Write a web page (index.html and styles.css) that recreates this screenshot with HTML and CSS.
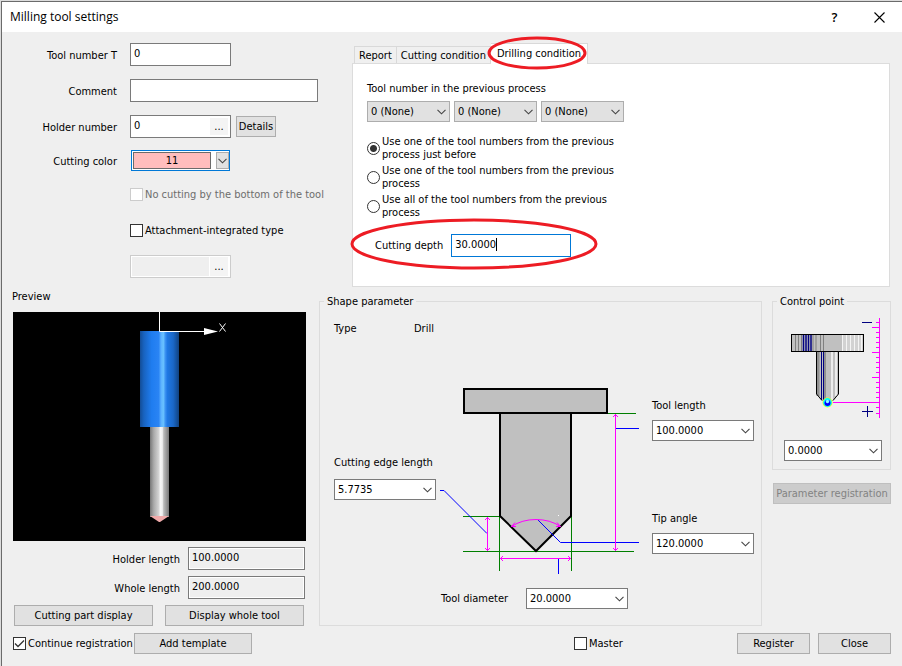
FILE: index.html
```html
<!DOCTYPE html>
<html lang="en">
<head>
<meta charset="utf-8">
<title>Milling tool settings</title>
<link rel="stylesheet" href="styles.css">
</head>
<body>
<svg width="0" height="0" class="defs" aria-hidden="true">
  <symbol id="chevron" viewBox="0 0 9 6"><path d="M0.5 0.8 4.5 4.8 8.5 0.8" fill="none" stroke="#444" stroke-width="1.1"/></symbol>
</svg>
<main class="dialog">
  <header class="titlebar">
    <h1>Milling tool settings</h1>
    <button class="title-button" aria-label="Help">?</button>
    <button class="title-button" aria-label="Close window"><svg width="11" height="11" viewBox="0 0 11 11"><path d="M0.5 0.5 10.5 10.5M10.5 0.5 0.5 10.5" stroke="#000" stroke-width="1.1"/></svg></button>
  </header>

  <section class="upper">
    <form class="tool-form">
      <div class="row"><label for="tool-no">Tool number T</label><input id="tool-no" class="text short" value="0"></div>
      <div class="row"><label for="comment">Comment</label><input id="comment" class="text grow" value=""></div>
      <div class="row"><label for="holder">Holder number</label>
        <div class="picker short"><input id="holder" value="0"><button type="button" aria-label="Browse holders">...</button></div>
        <button type="button" class="button details">Details</button></div>
      <div class="row color-row"><label for="color">Cutting color</label>
        <div class="color-combo"><select id="color"><option>11</option></select><span class="drop"><svg class="chevron" width="9" height="6"><use href="#chevron"/></svg></span></div></div>
      <div class="check-row first"><label class="check disabled"><input type="checkbox" disabled>No cutting by the bottom of the tool</label></div>
      <div class="check-row"><label class="check"><input type="checkbox">Attachment-integrated type</label></div>
      <div class="picker-row"><div class="picker short disabled"><input aria-label="Attachment" disabled><button type="button" aria-label="Browse attachments">...</button></div></div>
    </form>

    <section class="tabs">
      <div class="tab-bar" role="tablist">
        <button class="tab" role="tab">Report</button>
        <button class="tab" role="tab">Cutting condition</button>
        <button class="tab selected" role="tab" aria-selected="true">Drilling condition
          <svg class="mark tab-mark" width="100" height="34" viewBox="0 0 100 34"><ellipse cx="50" cy="17" rx="48" ry="15"/></svg></button>
      </div>
      <div class="tab-panel" role="tabpanel">
        <p class="panel-label">Tool number in the previous process</p>
        <div class="selects">
          <span class="combo gray"><select aria-label="First previous tool"><option>0 (None)</option></select><svg class="chevron" width="9" height="6"><use href="#chevron"/></svg></span>
          <span class="combo gray"><select aria-label="Second previous tool"><option>0 (None)</option></select><svg class="chevron" width="9" height="6"><use href="#chevron"/></svg></span>
          <span class="combo gray"><select aria-label="Third previous tool"><option>0 (None)</option></select><svg class="chevron" width="9" height="6"><use href="#chevron"/></svg></span>
        </div>
        <div class="radios">
          <label><input type="radio" name="prev" checked><span>Use one of the tool numbers from the previous<br>process just before</span></label>
          <label><input type="radio" name="prev"><span>Use one of the tool numbers from the previous<br>process</span></label>
          <label><input type="radio" name="prev"><span>Use all of the tool numbers from the previous<br>process</span></label>
        </div>
        <div class="depth">
          <label for="depth">Cutting depth</label>
          <span class="focused"><input id="depth" value="30.0000" size="7"><i class="caret"></i></span>
          <svg class="mark depth-mark" width="248" height="54" viewBox="0 0 248 54"><ellipse cx="124" cy="27" rx="122" ry="24"/></svg>
        </div>
      </div>
    </section>
  </section>

  <section class="lower">
    <section class="preview">
      <h2>Preview</h2>
      <div class="view">
        <svg width="293" height="229" viewBox="13 312 293 229">
          <defs>
            <linearGradient id="holder-fill">
              <stop offset="0" stop-color="#134d96"/><stop offset=".1" stop-color="#1863c0"/><stop offset=".3" stop-color="#1f7df0"/><stop offset=".48" stop-color="#2a84f4"/><stop offset=".54" stop-color="#5cb2ff"/><stop offset=".6" stop-color="#69c2ff"/><stop offset=".65" stop-color="#3c92f2"/><stop offset=".7" stop-color="#1f78e4"/><stop offset=".85" stop-color="#1a68c8"/><stop offset="1" stop-color="#11427f"/>
            </linearGradient>
            <linearGradient id="shank-fill">
              <stop offset="0" stop-color="#777"/><stop offset=".2" stop-color="#aaa"/><stop offset=".45" stop-color="#d2d2d2"/><stop offset=".55" stop-color="#f6f6f6"/><stop offset=".65" stop-color="#eee"/><stop offset=".72" stop-color="#bbb"/><stop offset="1" stop-color="#777"/>
            </linearGradient>
          </defs>
          <rect x="140" y="331" width="39" height="96" fill="url(#holder-fill)"/>
          <rect x="150" y="427" width="19" height="90" fill="url(#shank-fill)"/>
          <path d="M150 516H169L160 522H159Z" fill="#efaaaa"/>
          <path d="M159.500 312V331.500H205" fill="none" stroke="#fff"/>
          <path d="M204 328 218 331.500 204 335Z" fill="#fff"/>
          <path d="M219.500 323.500 225.500 331.500M225.500 323.500 219.500 331.500" stroke="#fff"/>
        </svg>
      </div>
      <div class="length-row"><label for="holder-len">Holder length</label><input id="holder-len" class="text readonly" value="100.0000" readonly></div>
      <div class="length-row"><label for="whole-len">Whole length</label><input id="whole-len" class="text readonly" value="200.0000" readonly></div>
      <div class="view-buttons"><button class="button">Cutting part display</button><button class="button">Display whole tool</button></div>
    </section>

    <fieldset class="shape">
      <legend>Shape parameter</legend>
      <div class="type"><span>Type</span><span>Drill</span></div>
      <div class="diagram">
        <div class="field edge"><label for="edge">Cutting edge length</label>
          <span class="combo"><select id="edge"><option>5.7735</option></select><svg class="chevron" width="9" height="6"><use href="#chevron"/></svg></span></div>
        <svg class="drawing" width="216" height="190" viewBox="436 386 216 190" fill="none">
          <g stroke="#007f00"><path d="M463 516.500H500M463 551.500H634M608 413.500H636M499.500 516V571M571.500 516V571"/></g>
          <path d="M500 413H571V516L536 551 500 516Z" fill="#c0c0c0" stroke="#000" stroke-width="2"/>
          <rect x="464" y="389" width="143" height="24" fill="#c0c0c0" stroke="#000" stroke-width="2"/>
          <g stroke="#00f"><path d="M440 490.500H444L487 533.500M538 520 560.500 542.500H639M616 428.500H639M558.500 559V574"/></g>
          <g stroke="#f0f">
            <path d="M487.500 517V551M485 520 487.500 517.500 490 520M485 548 487.500 550.500 490 548"/>
            <path d="M615.500 414V551M613 417 615.500 414.500 618 417M613 548 615.500 550.500 618 548"/>
            <path d="M500 558.500H571M503 556 500.500 558.500 503 561M568 556 570.500 558.500 568 561"/>
            <path d="M511.500 526.500Q522 519.500 536 519.500T560.500 526.500M515 522.500 511.500 526.500H516M557 522.500 560.500 526.500H556"/>
          </g>
          <path d="M558 515.500H559" stroke="#fff"/>
        </svg>
        <div class="right-fields">
          <div class="field"><label for="length">Tool length</label>
            <span class="combo"><select id="length"><option>100.0000</option></select><svg class="chevron" width="9" height="6"><use href="#chevron"/></svg></span></div>
          <div class="field"><label for="angle">Tip angle</label>
            <span class="combo"><select id="angle"><option>120.0000</option></select><svg class="chevron" width="9" height="6"><use href="#chevron"/></svg></span></div>
        </div>
      </div>
      <div class="diameter"><label for="diameter">Tool diameter</label>
        <span class="combo"><select id="diameter"><option>20.0000</option></select><svg class="chevron" width="9" height="6"><use href="#chevron"/></svg></span></div>
    </fieldset>

    <div class="side">
      <fieldset class="control">
        <legend>Control point</legend>
        <svg width="92" height="102" viewBox="790 317 92 102" fill="none">
          <rect x="791.500" y="334.500" width="72" height="17" fill="#c0c0c0"/>
          <path d="M842 334h22v18h-22z" fill="#d2d2d2"/>
          <path d="M795.500 335v17M798.500 335v17M801.500 335v17M813 335v17M816 335v17M820.500 335v17M823.500 335v17" stroke="#808080"/>
          <path d="M803.500 335v17M806 335v17M808.500 335v17M811 335v17" stroke="#000080" stroke-width="1.500"/>
          <path d="M842.500 335v17M846.500 335v17M850.500 335v17M854.500 335v17M858.500 335v17M861.500 335v17" stroke="#f4f4f4"/>
          <rect x="791.500" y="334.500" width="72" height="17" stroke="#000"/>
          <path d="M816.500 351.500H838.500V394L833 401H822L816.500 394Z" fill="#c0c0c0"/>
          <path d="M818 352V396" stroke="#909090" stroke-width="3"/>
          <path d="M825 352V400" stroke="#909090" stroke-width="2"/>
          <path d="M821.500 352V400M823.500 352V400" stroke="#000080"/>
          <path d="M832 352V400M836 352V396" stroke="#ececec" stroke-width="2"/>
          <path d="M822 400.500 816.500 394V351.500H838.500V394L833 400.500" stroke="#000"/>
          <path d="M833 402.500H879M879.500 318V418M872 327.500H879M872 352.500H879M872 377.500H879M876 322.500H879M876 332.500H879M876 337.500H879M876 342.500H879M876 347.500H879M876 357.500H879M876 362.500H879M876 367.500H879M876 372.500H879M876 382.500H879M876 387.500H879M876 392.500H879M876 397.500H879M876 407.500H879M876 413.500H879" stroke="#f0f"/>
          <path d="M862 322.500H872M862 411.500H873M867.500 406V417" stroke="#000080"/>
          <circle cx="827.500" cy="402.500" r="5" fill="#ff0"/>
          <circle cx="827.500" cy="402.500" r="4.400" fill="#0ff"/>
          <circle cx="827.500" cy="403" r="3" fill="#00f"/>
          <circle cx="827.500" cy="401.500" r="1.700" fill="#8ff"/>
        </svg>
        <span class="combo"><select aria-label="Control point"><option>0.0000</option></select><svg class="chevron" width="9" height="6"><use href="#chevron"/></svg></span>
      </fieldset>
      <button class="button" disabled>Parameter registration</button>
    </div>
  </section>

  <footer class="footer">
    <label class="check continue"><input type="checkbox" checked>Continue registration</label>
    <button class="button add">Add template</button>
    <label class="check master"><input type="checkbox">Master</label>
    <button class="button action">Register</button>
    <button class="button action">Close</button>
  </footer>
</main>
</body>
</html>
```
FILE: styles.css
```css
* { box-sizing: border-box; }

body {
  margin: 0;
  padding: 1px 0 0 1px;
  background: #dcdcdc;
  color: #000;
  font: 11px/13px "DejaVu Sans Condensed", "Noto Sans", sans-serif;
}

input, select, button { font: inherit; color: inherit; margin: 0; }
h1, h2, p { margin: 0; font-weight: normal; }
h2 { font-size: 11px; }
label, legend, button { white-space: nowrap; }
.defs { position: absolute; }

.dialog {
  min-height: calc(100vh - 1px);
  border-top: 1px solid #6b6b6b;
  border-left: 1px solid #6b6b6b;
  background: #efefef;
}

/* Title bar */
.titlebar {
  display: flex;
  align-items: center;
  height: 30px;
  padding-left: 8px;
  background: #fff;
}
.titlebar h1 { flex: 1; font: 12px/16px "Open Sans", sans-serif; }
.title-button {
  display: flex;
  align-items: center;
  justify-content: center;
  width: 45px;
  height: 30px;
  padding: 0;
  border: 0;
  background: none;
  font: 600 13px/16px "Open Sans", sans-serif;
}

/* Shared controls */
.text {
  height: 23px;
  padding: 0 3px 2px;
  border: 1px solid #7a7a7a;
  background: #fff;
  min-width: 0;
}
.text.readonly { background: #efefef; box-shadow: inset 0 0 0 1px #fff; }
.short { width: 101px; }
.grow { flex: 1; }

.button {
  height: 21px;
  padding: 0;
  border: 1px solid #adadad;
  background: #e1e1e1;
}
.button:disabled { background: #ccc; border-color: #bfbfbf; color: #838383; }

.combo { position: relative; display: block; width: 102px; height: 21px; }
.combo select {
  appearance: none;
  display: block;
  width: 100%;
  height: 100%;
  padding: 0 16px 0 3px;
  border: 1px solid #7a7a7a;
  border-radius: 0;
  background: #fff;
}
.combo .chevron { position: absolute; right: 4px; top: 8px; }
.combo.gray { width: 83px; }
.combo.gray select { background: #e1e1e1; border-color: #adadad; }

.picker {
  display: flex;
  height: 23px;
  padding: 2px;
  border: 1px solid #7a7a7a;
  background: #fff;
}
.picker input { flex: 1; min-width: 0; padding: 0 1px 2px; border: 0; background: none; }
.picker button { width: 18px; padding: 0; border: 0; background: #f4f4f4; }
.picker.disabled { padding: 1px 2px 1px 1px; border-color: #ccc; }
.picker.disabled input { background: #efefef; margin-right: 1px; }

.check { display: flex; align-items: center; gap: 2px; }
.check input {
  appearance: none;
  flex: none;
  width: 13px;
  height: 13px;
  border: 1px solid #333;
  background: #fff;
}
.check input:checked {
  background: #fff url("data:image/svg+xml,%3Csvg xmlns='http://www.w3.org/2000/svg' viewBox='0 0 11 11'%3E%3Cpath d='M1 5.500 4 8.500 10 2.500' fill='none' stroke='%23333' stroke-width='1.300'/%3E%3C/svg%3E");
}
.check.disabled { color: #6d6d6d; }
.check.disabled input { border-color: #ccc; }

/* Upper half */
.upper { display: flex; gap: 34px; padding: 11px 12px 0 0; }
.tool-form { width: 316px; }
.row { display: flex; align-items: center; height: 23px; margin-bottom: 13px; }
.row > label { width: 115px; margin-right: 13px; padding-top: 1px; text-align: right; }
.color-row { height: 21px; margin: -1px 0 16px; }
.details { width: 40px; margin-left: 5px; }
.check-row { display: flex; height: 15px; margin: 21px 0 0 128px; }
.check-row.first { margin-top: 0; }
.picker-row { margin: 17px 0 0 128px; }

.color-combo {
  display: flex;
  width: 99px;
  height: 21px;
  margin-left: 1px;
  padding: 1px 0;
  border: 1px solid #0078d7;
  background: #fff;
}
.color-combo select {
  appearance: none;
  width: 78px;
  margin: 0 5px 0 1px;
  padding: 0;
  border: 1px solid #6b6b6b;
  border-radius: 0;
  background: #ffbdbd;
  text-align: center;
  text-align-last: center;
}
.drop {
  display: flex;
  flex: 1;
  align-items: center;
  justify-content: center;
  border: 1px solid #adadad;
  background: #e1e1e1;
}

.tabs { flex: 1; min-width: 0; }
.tab-bar { display: flex; align-items: flex-end; height: 20px; padding-left: 2px; }
.tab {
  height: 17px;
  padding: 0 4px;
  border: 1px solid #d9d9d9;
  border-width: 1px 1px 0 0;
  background: #f0f0f0;
}
.tab:first-child { border-left-width: 1px; }
.tab.selected { position: relative; height: 21px; margin-bottom: -1px; padding: 0 6px 2px; background: #fff; }
.mark { position: absolute; fill: none; stroke: #ed1c24; stroke-width: 3px; pointer-events: none; }
.tab-mark { left: -4px; top: -8px; }

.tab-panel { min-height: 224px; padding: 18px 14px 0; border: 1px solid #dcdcdc; background: #fff; }
.selects { display: flex; gap: 4px; margin-top: 6px; }
.radios { display: flex; flex-direction: column; gap: 3px; margin-top: 13px; }
.radios label { display: flex; align-items: center; gap: 2px; }
.radios input {
  appearance: none;
  flex: none;
  width: 13px;
  height: 13px;
  border: 1px solid #333;
  border-radius: 50%;
  background: #fff;
}
.radios input:checked { background: radial-gradient(circle, #333 0 3px, #fff 4px); }
.depth { position: relative; display: flex; align-items: center; gap: 8px; margin-top: 15px; padding-left: 8px; }
.focused {
  display: flex;
  align-items: center;
  width: 120px;
  height: 23px;
  padding: 0 3px 2px;
  border: 1px solid #0078d7;
  background: #fff;
}
.focused input { width: 41px; padding: 0; border: 0; outline: 0; }
.caret { width: 1px; height: 13px; background: #000; }
.depth-mark { left: -17px; top: -17px; }

/* Lower half */
.lower { display: flex; align-items: flex-start; padding: 3px 11px 0 10px; }
.preview { width: 294px; margin-right: 13px; }
.view { margin: 9px 0 6px 1px; background: #000; }
.view svg { display: block; }
.length-row { display: flex; align-items: center; justify-content: flex-end; gap: 8px; margin: 0 1px 6px 0; }
.length-row label { padding-top: 1px; }
.length-row .text { width: 117px; }
.view-buttons { display: flex; gap: 12px; padding: 0 2px; }
.view-buttons .button { flex: 1; }

fieldset { min-width: 0; margin: 0; padding: 0; border: 1px solid #dcdcdc; }
legend { margin-left: 5px; padding: 0 3px; }

.shape { flex: 1; margin-top: 5px; padding: 0 7px 16px 14px; }
.shape legend { margin-left: -10px; }
.type { display: flex; margin-top: 14px; }
.type span { width: 80px; }
.diagram { display: flex; margin-top: 51px; }
.field { display: flex; flex-direction: column; gap: 8px; }
.edge { width: 102px; padding-top: 70px; }
.edge .combo { margin-top: 2px; }
.drawing { flex: 1; min-width: 0; }
.right-fields { display: flex; flex-direction: column; gap: 71px; width: 102px; padding-top: 13px; }
.diameter { display: flex; align-items: center; gap: 18px; margin-top: 12px; padding-left: 107px; }

.side { width: 119px; margin: 5px 0 0 10px; }
.control { padding: 0 9px 8px 11px; }
.control legend { margin-left: -7px; }
.control svg:first-of-type { display: block; }
.control > svg { margin: 9px 0 0 6px; }
.control .combo { width: 98px; margin-top: 21px; }
.side > .button { width: 118px; margin: 13px 0 0 1px; }

.footer { display: flex; align-items: center; padding: 7px 11px 11px 11px; }
.continue { width: 121px; }
.add { width: 118px; }
.master { margin: 0 auto 0 322px; }
.action { width: 73px; margin-left: 8px; }
```
